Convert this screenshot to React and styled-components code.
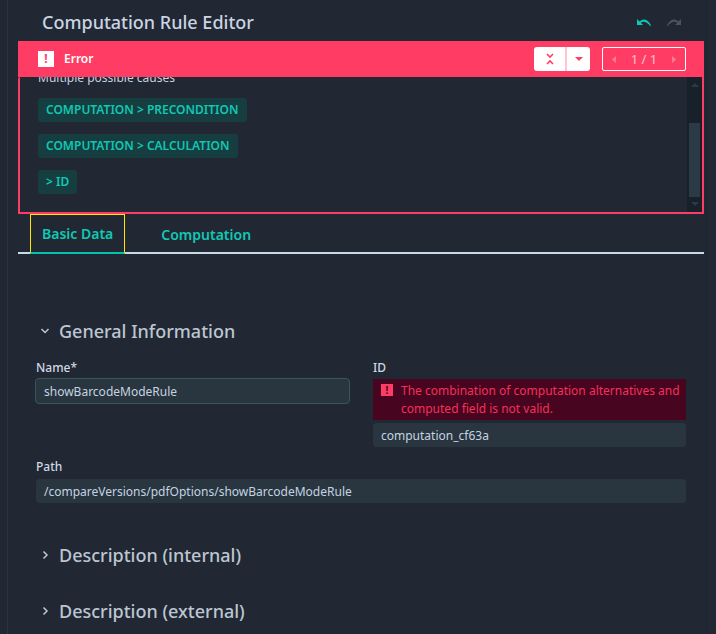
import React from 'react';
import styled, { createGlobalStyle } from 'styled-components';

const GlobalStyle = createGlobalStyle`
  html, body {
    margin: 0;
    padding: 0;
    background: #212733;
  }
  * {
    box-sizing: border-box;
  }
`;

const Page = styled.div`
  width: 716px;
  height: 634px;
  overflow: hidden;
  display: flex;
  background: #212733;
  font-family: 'Noto Sans', sans-serif;
  color: #c5d3e0;
`;

const Gutter = styled.div`
  width: 8px;
  flex: none;
  border-right: 1px solid #2a3540;
`;

const Main = styled.div`
  width: 696px;
  padding-left: 10px;
  flex: none;
`;

const RightEdge = styled.div`
  flex: 1;
  border-left: 1px solid #1e2530;
  margin-left: 2px;
  background: #222833;
`;

const TitleBar = styled.div`
  height: 41px;
  padding: 2px 24px 0;
  display: flex;
  align-items: center;
  justify-content: space-between;
`;

const Title = styled.h1`
  margin: 0;
  font-size: 18px;
  line-height: 24px;
  font-weight: 500;
  color: #c9d5e2;
`;

const History = styled.div`
  display: flex;
  gap: 16px;
  margin-right: -1px;
`;

const Alert = styled.section`
  height: 173px;
`;

const AlertHeader = styled.div`
  height: 36px;
  background: #ff3d64;
  display: flex;
  align-items: center;
  padding: 0 18px 0 20px;
  color: #fff;
`;

const AlertTitle = styled.span`
  margin: 0 0 2px 10px;
  font-size: 12px;
  font-weight: 600;
  flex: 1;
`;

const SplitButton = styled.div`
  width: 56px;
  height: 24px;
  display: flex;
  background: #fff;
  border-radius: 3px;
  margin-right: 12px;
`;

const SplitPart = styled.div`
  display: flex;
  align-items: center;
  justify-content: center;
  width: ${({ $w }) => $w}px;
  border-left: ${({ $divided }) => ($divided ? '2px solid #ffc5d1' : 'none')};
`;

const Pager = styled.div`
  width: 84px;
  height: 24px;
  border: 1px solid #fff;
  border-radius: 2px;
  display: flex;
  align-items: center;
  justify-content: space-between;
  padding: 0 9px;
  font-size: 13px;
  color: #ffc0cd;
`;

const AlertBody = styled.div`
  height: 137px;
  border: 2px solid #ff3d64;
  border-top: 0;
  border-top-left-radius: 2px;
  display: flex;
  overflow: hidden;
`;

const CauseList = styled.div`
  flex: 1;
  padding-left: 18px;
  overflow: hidden;
`;

const CauseIntro = styled.p`
  margin: -7px 0 12px;
  font-size: 12px;
  line-height: 16px;
  color: #c5d3e0;
`;

const Cause = styled.div`
  width: fit-content;
  height: 24px;
  margin-bottom: 12px;
  padding: 0 8px;
  border-radius: 3px;
  background: #163d40;
  color: #10c7b3;
  font-size: 12px;
  line-height: 24px;
  font-weight: 600;
`;

const Scrollbar = styled.div`
  width: 15px;
  background: #18202a;
  display: flex;
  flex-direction: column;
  align-items: center;
  padding: 6px 0 5px;
`;

const ScrollThumb = styled.div`
  width: 11px;
  height: 74px;
  margin: 36px 0 5px;
  background: #2c3a45;
`;

const Tabs = styled.nav`
  height: 40px;
  padding-left: 12px;
  display: flex;
  border-bottom: 2px solid #c5dbe8;
`;

const Tab = styled.div`
  height: 40px;
  padding: 0 ${({ $active }) => ($active ? 11 : 36)}px;
  display: flex;
  align-items: center;
  font-size: 14px;
  font-weight: 600;
  color: #10c7b3;
  ${({ $active }) => ($active ? 'border: 1px solid #ffe600; border-bottom: 2px solid #00c4ad;' : '')}
`;

const SectionHeader = styled.div`
  display: flex;
  align-items: center;
  height: 24px;
  margin-top: ${({ $top }) => $top}px;
  margin-left: 21px;
  gap: 8px;
  font-size: 18px;
  font-weight: 500;
  color: #bcc6d2;
`;

const FieldGrid = styled.div`
  display: grid;
  grid-template-columns: 315px 313px;
  column-gap: 23px;
  margin: 16px 0 0 17px;
`;

const Field = styled.div`
  grid-column: ${({ $wide }) => ($wide ? '1 / -1' : 'auto')};
  margin-top: ${({ $top }) => $top || 0}px;
  ${({ $wide }) => ($wide ? 'padding-left: 1px;' : '')}
`;

const Label = styled.label`
  display: block;
  height: 18px;
  padding-left: ${({ $indent }) => ($indent ? 1 : 0)}px;
  font-size: 12px;
  line-height: 18px;
  font-weight: 500;
  color: #cdd9e5;
  margin-bottom: ${({ $gap }) => $gap}px;
`;

const Input = styled.div`
  height: ${({ $h }) => $h}px;
  padding: 0 8px;
  display: flex;
  align-items: center;
  background: #293640;
  border-radius: 4px;
  border: ${({ $outlined }) => ($outlined ? '1px solid #375560' : 'none')};
  font-size: 12px;
  color: #c5d3e0;
`;

const FieldError = styled.div`
  height: 41px;
  margin-bottom: 3px;
  padding: 3px 4px 3px 8px;
  display: flex;
  gap: 8px;
  background: #47051f;
  color: #f5305a;
  font-size: 12px;
  line-height: 18px;
`;

const ErrorBadge = styled.span`
  width: 12px;
  height: 12px;
  flex: none;
  margin-top: 2px;
  background: #ff3d64;
  color: #47051f;
  font-size: 10px;
  line-height: 12px;
  font-weight: 700;
  text-align: center;
`;

const HeaderBadge = styled.span`
  width: 16px;
  height: 16px;
  background: #fff;
  color: #ff3d64;
  font-size: 12px;
  line-height: 16px;
  font-weight: 700;
  text-align: center;
`;

const Chevron = ({ open }) => (
  <svg width="12" height="12" viewBox="0 0 12 12" fill="none" stroke="#bcc6d2" strokeWidth="1.5">
    <path d={open ? 'M2.5 4 L6 7.5 L9.5 4' : 'M4.5 2.5 L8 6 L4.5 9.5'} />
  </svg>
);

const Undo = ({ color }) => (
  <svg width="14" height="8" viewBox="0 0 14 8" fill={color}>
    <path d="M0 1 L0 7 L6 7 L3.8 4.8 C5.6 3 9.6 3 13 8 L14 7.6 C11 1 6 0 2.6 3.6 Z" />
  </svg>
);

const Redo = ({ color }) => (
  <svg width="14" height="8" viewBox="0 0 14 8" fill={color}>
    <path d="M14 1 L14 7 L8 7 L10.2 4.8 C8.4 3 4.4 3 1 8 L0 7.6 C3 1 8 0 11.4 3.6 Z" />
  </svg>
);

const Collapse = () => (
  <svg width="8" height="12" viewBox="0 0 8 12" fill="none" stroke="#ff3d64" strokeWidth="1.6">
    <path d="M1 1 L4 4 L7 1 M1 11 L4 8 L7 11" />
  </svg>
);

const Triangle = ({ dir, color }) => (
  <svg width="8" height="4" viewBox="0 0 8 4" fill={color}>
    <path d={dir === 'up' ? 'M0 4 L4 0 L8 4 Z' : 'M0 0 L8 0 L4 4 Z'} />
  </svg>
);

const PagerArrow = ({ dir }) => (
  <svg width="5" height="7" viewBox="0 0 5 7" fill="#ff7a95">
    <path d={dir === 'left' ? 'M4 0 L4 7 L0 3.5 Z' : 'M1 0 L1 7 L5 3.5 Z'} />
  </svg>
);

export default function App() {
  return (
    <Page>
      <GlobalStyle />
      <Gutter />
      <Main>
        <TitleBar>
          <Title>Computation Rule Editor</Title>
          <History>
            <Undo color="#10c7b3" />
            <Redo color="#4a5560" />
          </History>
        </TitleBar>
        <Alert>
          <AlertHeader>
            <HeaderBadge>!</HeaderBadge>
            <AlertTitle>Error</AlertTitle>
            <SplitButton>
              <SplitPart $w={31}>
                <Collapse />
              </SplitPart>
              <SplitPart $w={25} $divided>
                <Triangle dir="down" color="#ff3d64" />
              </SplitPart>
            </SplitButton>
            <Pager>
              <PagerArrow dir="left" />
              <span>1 / 1</span>
              <PagerArrow dir="right" />
            </Pager>
          </AlertHeader>
          <AlertBody>
            <CauseList>
              <CauseIntro>Multiple possible causes</CauseIntro>
              <Cause>COMPUTATION &gt; PRECONDITION</Cause>
              <Cause>COMPUTATION &gt; CALCULATION</Cause>
              <Cause>&gt; ID</Cause>
            </CauseList>
            <Scrollbar>
              <Triangle dir="up" color="#2c3a45" />
              <ScrollThumb />
              <Triangle dir="down" color="#2c3a45" />
            </Scrollbar>
          </AlertBody>
        </Alert>
        <Tabs>
          <Tab $active>Basic Data</Tab>
          <Tab>Computation</Tab>
        </Tabs>
        <SectionHeader $top={65}>
          <Chevron open />
          General Information
        </SectionHeader>
        <FieldGrid>
          <Field>
            <Label $gap={1} $indent>Name*</Label>
            <Input $h={26} $outlined>showBarcodeModeRule</Input>
          </Field>
          <Field>
            <Label $gap={2}>ID</Label>
            <FieldError>
              <ErrorBadge>!</ErrorBadge>
              <span>The combination of computation alternatives and computed field is not valid.</span>
            </FieldError>
            <Input $h={24}>computation_cf63a</Input>
          </Field>
          <Field $wide $top={11}>
            <Label $gap={3}>Path</Label>
            <Input $h={24}>/compareVersions/pdfOptions/showBarcodeModeRule</Input>
          </Field>
        </FieldGrid>
        <SectionHeader $top={40}>
          <Chevron />
          Description (internal)
        </SectionHeader>
        <SectionHeader $top={32}>
          <Chevron />
          Description (external)
        </SectionHeader>
      </Main>
      <RightEdge />
    </Page>
  );
}
